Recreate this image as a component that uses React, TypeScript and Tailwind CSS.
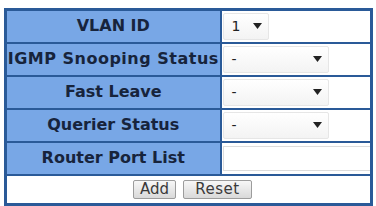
import React from 'react';

const labelCls =
  'h-[33px] border-2 border-[#2a5a98] bg-[#78a7e6] text-center font-bold text-[16px] text-[#17243c] p-0 whitespace-nowrap';
const valueCls = 'h-[33px] border-2 border-[#2a5a98] bg-white px-[1px] align-middle';
const btnCls =
  'h-[19px] text-[15px] text-[#3a3a3a] border border-[#9c9c9c] rounded-[2px] bg-gradient-to-b from-[#f7f7f7] to-[#d9d9d9] leading-none';

function Select({ value, width }: { value: string; width: string }) {
  return (
    <div
      className={`${width} h-[27px] flex items-center justify-between pl-[8px] pr-[6px] bg-gradient-to-b from-white to-[#f3f3f3] border border-[#e6e6e6] rounded-[2px] text-[14px] text-[#222]`}
    >
      <span>{value}</span>
      <svg width="9" height="6" viewBox="0 0 9 6">
        <path d="M0 0 L9 0 L4.5 6 Z" fill="#222" />
      </svg>
    </div>
  );
}

export default function App() {
  return (
    <div
      className="w-[376px] h-[206px] bg-white pt-[8px] pl-[4px]"
      style={{ fontFamily: 'Verdana, "DejaVu Sans", sans-serif' }}
    >
      <table className="table-fixed border-collapse w-[369px] border-[3px] border-[#2a5a98]">
        <colgroup>
          <col className="w-[215px]" />
          <col />
        </colgroup>
        <tbody>
          <tr>
            <td className={labelCls}>VLAN ID</td>
            <td className={valueCls}>
              <Select value="1" width="w-[46px]" />
            </td>
          </tr>
          <tr>
            <td className={`${labelCls} tracking-[0.5px]`}>IGMP Snooping Status</td>
            <td className={valueCls}>
              <Select value="-" width="w-[106px]" />
            </td>
          </tr>
          <tr>
            <td className={labelCls}>Fast Leave</td>
            <td className={valueCls}>
              <Select value="-" width="w-[106px]" />
            </td>
          </tr>
          <tr>
            <td className={labelCls}>Querier Status</td>
            <td className={valueCls}>
              <Select value="-" width="w-[106px]" />
            </td>
          </tr>
          <tr>
            <td className={labelCls}>Router Port List</td>
            <td className={valueCls}>
              <div className="w-[148px] h-[25px] border border-[#dcdcdc] bg-white" />
            </td>
          </tr>
          <tr>
            <td colSpan={2} className="h-[30px] border-2 border-[#2a5a98] bg-white text-center">
              <div className="flex justify-center gap-[7px] pl-[8px]">
                <button className={`${btnCls} w-[43px]`}>Add</button>
                <button className={`${btnCls} w-[69px] tracking-[0.5px]`}>Reset</button>
              </div>
            </td>
          </tr>
        </tbody>
      </table>
    </div>
  );
}
